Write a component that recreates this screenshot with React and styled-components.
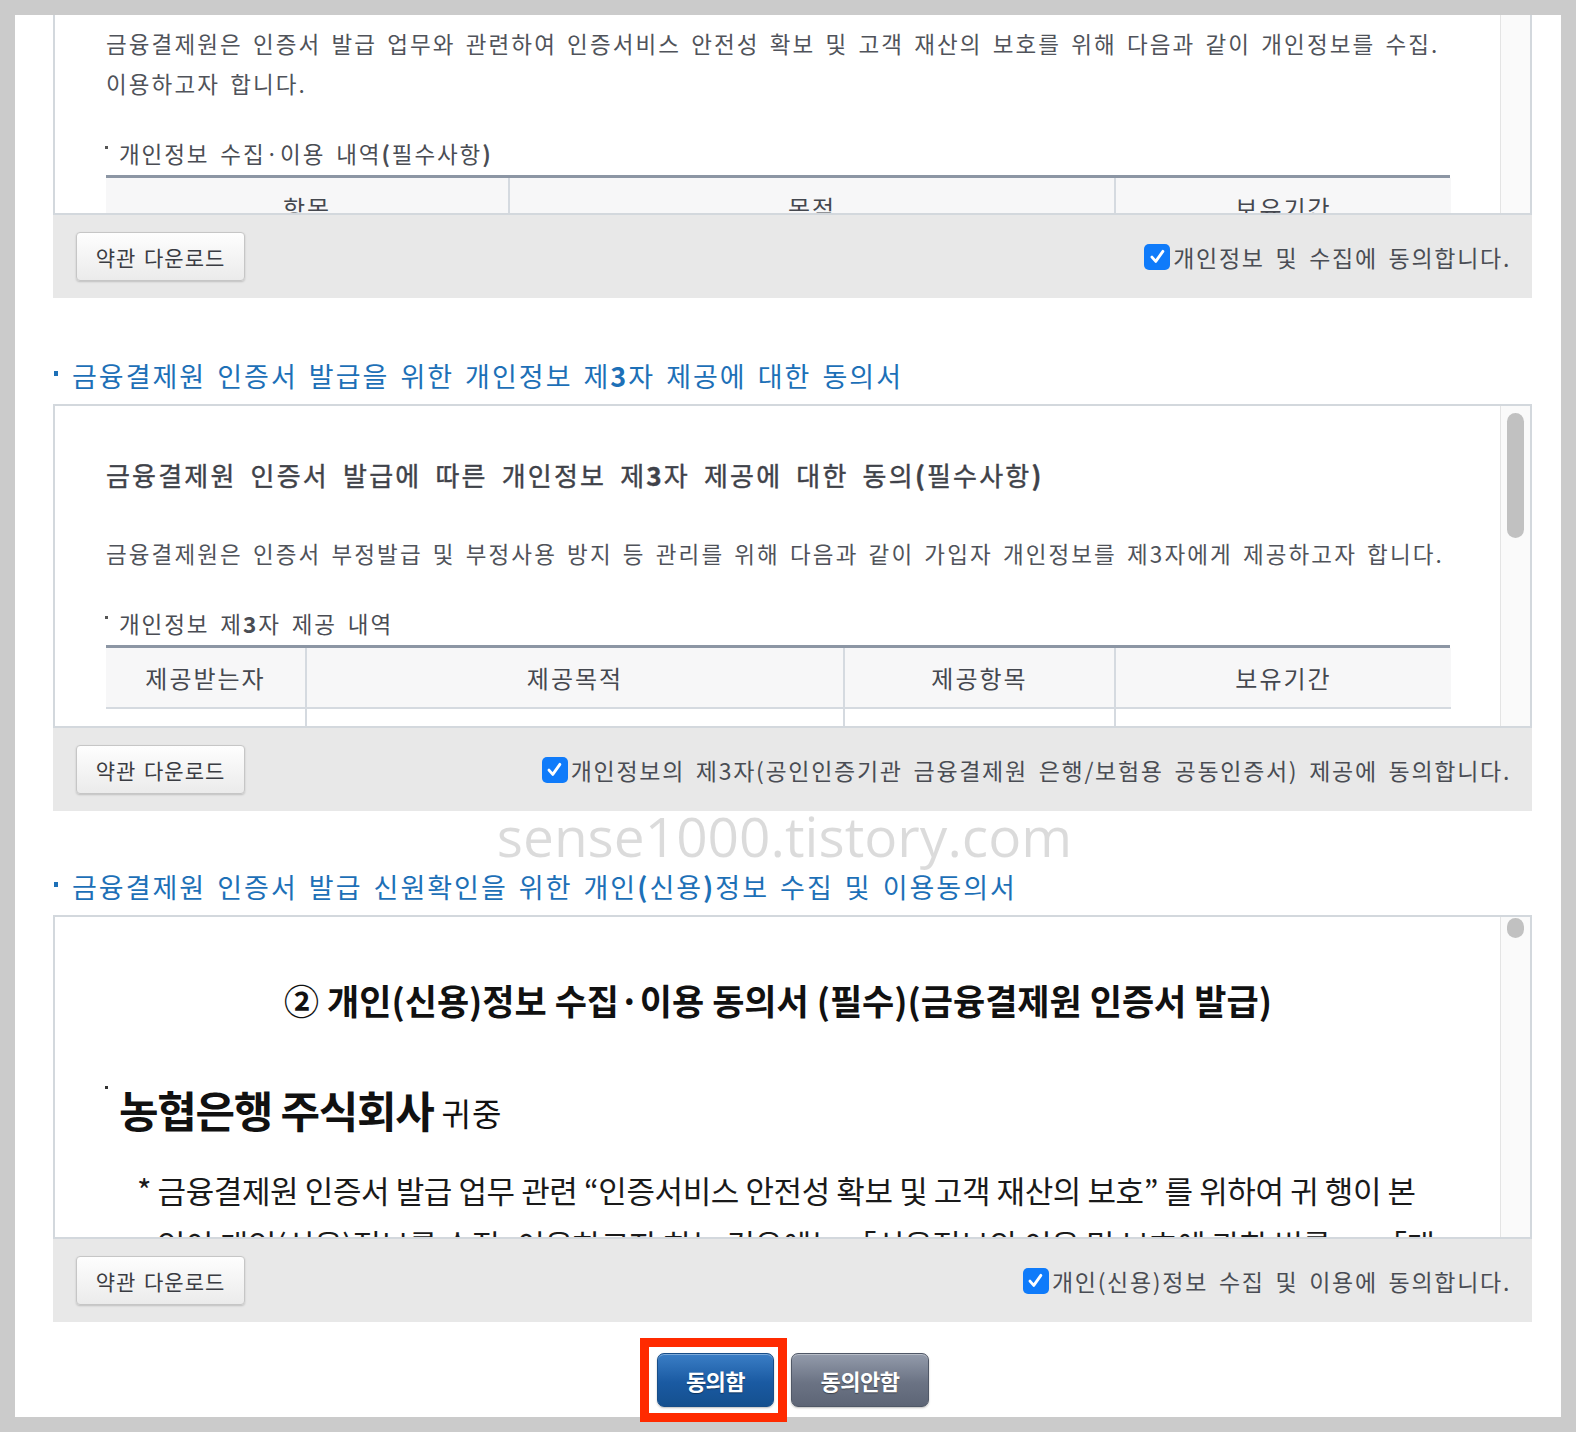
import React from "react";
import styled, { createGlobalStyle } from "styled-components";

const GlobalStyle = createGlobalStyle`
  html, body { margin: 0; padding: 0; background: #cbcbcb; }
  body {
    font-family: "Noto Sans CJK KR", "Noto Sans", sans-serif;
    -webkit-font-smoothing: antialiased;
  }
  * { box-sizing: border-box; }
`;

const Frame = styled.div`
  width: 1576px;
  height: 1432px;
  padding: 15px;
  background: #cbcbcb;
`;

const Page = styled.div`
  position: relative;
  height: 1402px;
  background: #fff;
  padding-left: 38px;
  padding-right: 29px;
`;

const Section = styled.section`
  margin-top: ${(p) => p.$gap || 0}px;
`;

const Title = styled.h2`
  margin: 0 0 10px;
  display: flex;
  align-items: flex-start;
  font-size: 27px;
  line-height: 36px;
  font-weight: 400;
  letter-spacing: 2px;
  word-spacing: 3px;
  color: #1d70b7;
  white-space: nowrap;
  &::before {
    content: "";
    flex: none;
    width: 4px;
    height: 5px;
    margin: 13px 14px 0 1px;
    background: #1d70b7;
  }
`;

const Strong = styled.b`
  font-weight: 700;
`;

const Box = styled.div`
  display: flex;
  height: ${(p) => p.$h}px;
  border: 2px solid #d3d8dd;
  ${(p) => p.$cut && "border-top: none;"}
  background: #fff;
`;

const Scroll = styled.div`
  flex: 1;
  min-width: 0;
  overflow: hidden;
  padding: ${(p) => p.$top}px 50px 0 51px;
`;

const Track = styled.div`
  flex: none;
  width: 30px;
  border-left: 1px solid #e4e4e4;
  background: #fafafa;
  display: flex;
  justify-content: center;
  align-items: flex-start;
`;

const Thumb = styled.div`
  width: 17px;
  height: ${(p) => p.$h}px;
  margin-top: ${(p) => p.$top}px;
  border-radius: 9px;
  background: #c1c1c1;
`;

const DocHeading = styled.h3`
  margin: 0 0 40px;
  font-size: 26px;
  line-height: 36px;
  font-weight: 400;
  color: #3f4249;
  -webkit-text-stroke: 0.4px #3f4249;
  letter-spacing: 2.2px;
  word-spacing: 6px;
  white-space: nowrap;
`;

const Para = styled.p`
  margin: 0;
  font-size: 22.5px;
  line-height: 40px;
  color: #50535a;
  letter-spacing: 2.1px;
  word-spacing: 3px;
  white-space: nowrap;
`;

const SubHead = styled.p`
  margin: 34px 0 6px;
  display: flex;
  align-items: flex-start;
  font-size: 22.5px;
  line-height: 32px;
  color: #4a4d54;
  letter-spacing: 1.9px;
  word-spacing: 4px;
  white-space: nowrap;
  &::before {
    content: "";
    flex: none;
    width: 3px;
    height: 3px;
    margin: 9px 11px 0 -1px;
    background: #555;
  }
`;

const Table = styled.div`
  display: grid;
  grid-template-columns: ${(p) => p.$cols};
  border-top: 3px solid #8c96a4;
`;

const Th = styled.div`
  height: 61px;
  display: flex;
  align-items: center;
  justify-content: center;
  background: #f7f7f8;
  border-bottom: 2px solid #d5dae0;
  border-left: ${(p) => (p.$first ? "none" : "2px solid #d5dae0")};
  font-size: 24px;
  letter-spacing: 2px;
  color: #45484f;
`;

const Td = styled.div`
  height: 50px;
  border-left: ${(p) => (p.$first ? "none" : "2px solid #d5dae0")};
`;

const FormTitle = styled.h3`
  margin: 0;
  text-align: center;
  font-size: 35px;
  line-height: 44px;
  font-weight: 700;
  color: #111;
  letter-spacing: 0;
  white-space: nowrap;
`;

const Addressee = styled.p`
  margin: 62px 0 0;
  display: flex;
  align-items: flex-start;
  font-size: 43px;
  line-height: 50px;
  font-weight: 700;
  color: #111;
  letter-spacing: -1.3px;
  white-space: nowrap;
  &::before {
    content: "";
    flex: none;
    width: 3px;
    height: 3px;
    margin: 2px 11px 0 -1px;
    background: #333;
  }
`;

const Regards = styled.span`
  align-self: flex-end;
  margin-left: 8px;
  font-size: 32px;
  line-height: 44px;
  font-weight: 400;
  letter-spacing: 1px;
`;

const Clause = styled.p`
  margin: 29px 0 0;
  padding-left: 51px;
  text-indent: -20px;
  font-size: 31px;
  line-height: 54px;
  color: #1a1a1a;
  letter-spacing: -0.4px;
  white-space: nowrap;
`;

const Footer = styled.div`
  display: flex;
  align-items: center;
  justify-content: space-between;
  height: 83px;
  padding: 0 21px 0 23px;
  background: #e8e8e8;
`;

const DownloadButton = styled.button`
  width: 169px;
  height: 49px;
  border: 1px solid #c6c6c6;
  border-radius: 4px;
  background: linear-gradient(#fefefe, #ebebeb);
  box-shadow: 0 1px 2px rgba(0, 0, 0, 0.18);
  font-family: inherit;
  font-size: 21px;
  color: #3a3c42;
  letter-spacing: 1px;
  word-spacing: 2px;
  cursor: pointer;
`;

const Agree = styled.label`
  display: flex;
  align-items: center;
  gap: 3px;
  font-size: 23px;
  color: #4a4d54;
  letter-spacing: 1.7px;
  word-spacing: 4px;
  white-space: nowrap;
`;

const CheckBox = styled.span`
  flex: none;
  width: 26px;
  height: 26px;
  border-radius: 5px;
  background: #0f7bfa;
  display: inline-flex;
  align-items: center;
  justify-content: center;
`;

const Actions = styled.div`
  display: flex;
  justify-content: center;
  align-items: center;
  margin-top: 16px;
  padding-right: 16px;
`;

const Highlight = styled.div`
  display: flex;
  border: 9px solid #ff2a00;
  padding: 6px 4px 6px 8px;
`;

const ActionButton = styled.button`
  width: ${(p) => p.$w}px;
  height: 54px;
  margin-left: ${(p) => p.$ml || 0}px;
  border-radius: 7px;
  border: 1px solid ${(p) => (p.$primary ? "#174d88" : "#505867")};
  background: ${(p) =>
    p.$primary
      ? "linear-gradient(#3a7ec6, #1a5aa2 55%, #15508f)"
      : "linear-gradient(#939bab, #6b7384 55%, #5d6576)"};
  box-shadow: inset 0 1px 0 rgba(255, 255, 255, 0.35), 0 1px 2px rgba(0, 0, 0, 0.25);
  color: #fff;
  font-family: inherit;
  font-size: 22px;
  font-weight: 700;
  letter-spacing: -0.5px;
  text-shadow: 0 1px 1px rgba(0, 0, 0, 0.4);
  cursor: pointer;
`;

const Watermark = styled.div`
  position: absolute;
  top: 793px;
  left: 0;
  right: 7px;
  text-align: center;
  font-family: "Open Sans", "Liberation Sans", sans-serif;
  font-size: 55px;
  line-height: 55px;
  color: rgba(0, 0, 0, 0.14);
  pointer-events: none;
`;

function Check() {
  return (
    <CheckBox>
      <svg width="19" height="19" viewBox="0 0 24 24" fill="none">
        <path d="M5 12.8 L9.8 18.2 L18.8 5.5" stroke="#fff" strokeWidth="3.6" strokeLinecap="round" strokeLinejoin="round" />
      </svg>
    </CheckBox>
  );
}

function TermsFooter({ label }) {
  return (
    <Footer>
      <DownloadButton>약관 다운로드</DownloadButton>
      <Agree>
        <Check />
        {label}
      </Agree>
    </Footer>
  );
}

function TermsTable({ cols, heads, body }) {
  return (
    <Table $cols={cols}>
      {heads.map((h, i) => (
        <Th key={h} $first={i === 0}>{h}</Th>
      ))}
      {body && heads.map((h, i) => <Td key={"b" + h} $first={i === 0} />)}
    </Table>
  );
}

export default function App() {
  return (
    <>
      <GlobalStyle />
      <Frame>
        <Page>
          <Section>
            <Box $h={200} $cut>
              <Scroll $top={8}>
                <Para>
                  금융결제원은 인증서 발급 업무와 관련하여 인증서비스 안전성 확보 및 고객 재산의 보호를 위해 다음과 같이 개인정보를 수집.
                  <br />
                  이용하고자 합니다.
                </Para>
                <SubHead>
                  개인정보 수집·이용 내역<Strong>(</Strong>필수사항<Strong>)</Strong>
                </SubHead>
                <TermsTable cols="402px 606px 337px" heads={["항목", "목적", "보유기간"]} />
              </Scroll>
              <Track />
            </Box>
            <TermsFooter label="개인정보 및 수집에 동의합니다." />
          </Section>

          <Section $gap={60}>
            <Title>
              <span>
                금융결제원 인증서 발급을 위한 개인정보 제<Strong>3</Strong>자 제공에 대한 동의서
              </span>
            </Title>
            <Box $h={324}>
              <Scroll $top={51}>
                <DocHeading>
                  금융결제원 인증서 발급에 따른 개인정보 제<Strong>3</Strong>자 제공에 대한 동의<Strong>(</Strong>필수사항<Strong>)</Strong>
                </DocHeading>
                <Para>
                  금융결제원은 인증서 부정발급 및 부정사용 방지 등 관리를 위해 다음과 같이 가입자 개인정보를 제3자에게 제공하고자 합니다.
                </Para>
                <SubHead>
                  개인정보 제<Strong>3</Strong>자 제공 내역
                </SubHead>
                <TermsTable
                  cols="199px 538px 271px 337px"
                  heads={["제공받는자", "제공목적", "제공항목", "보유기간"]}
                  body
                />
              </Scroll>
              <Track>
                <Thumb $top={7} $h={125} />
              </Track>
            </Box>
            <TermsFooter label="개인정보의 제3자(공인인증기관 금융결제원 은행/보험용 공동인증서) 제공에 동의합니다." />
          </Section>

          <Section $gap={58}>
            <Title>
              <span>
                금융결제원 인증서 발급 신원확인을 위한 개인<Strong>(</Strong>신용<Strong>)</Strong>정보 수집 및 이용동의서
              </span>
            </Title>
            <Box $h={324}>
              <Scroll $top={61}>
                <FormTitle>② 개인(신용)정보 수집·이용 동의서 (필수)(금융결제원 인증서 발급)</FormTitle>
                <Addressee>
                  농협은행 주식회사
                  <Regards>귀중</Regards>
                </Addressee>
                <Clause>
                  * 금융결제원 인증서 발급 업무 관련 “인증서비스 안전성 확보 및 고객 재산의 보호” 를 위하여 귀 행이 본
                  <br />
                  인이 개인(신용)정보를 수집·이용하고자 하는 경우에는 「신용정보의 이용 및 보호에 관한 법률」, 「개
                </Clause>
              </Scroll>
              <Track>
                <Thumb $top={1} $h={20} />
              </Track>
            </Box>
            <TermsFooter label="개인(신용)정보 수집 및 이용에 동의합니다." />
          </Section>

          <Actions>
            <Highlight>
              <ActionButton $primary $w={117}>동의함</ActionButton>
            </Highlight>
            <ActionButton $w={138} $ml={4}>동의안함</ActionButton>
          </Actions>

          <Watermark>sense1000.tistory.com</Watermark>
        </Page>
      </Frame>
    </>
  );
}
